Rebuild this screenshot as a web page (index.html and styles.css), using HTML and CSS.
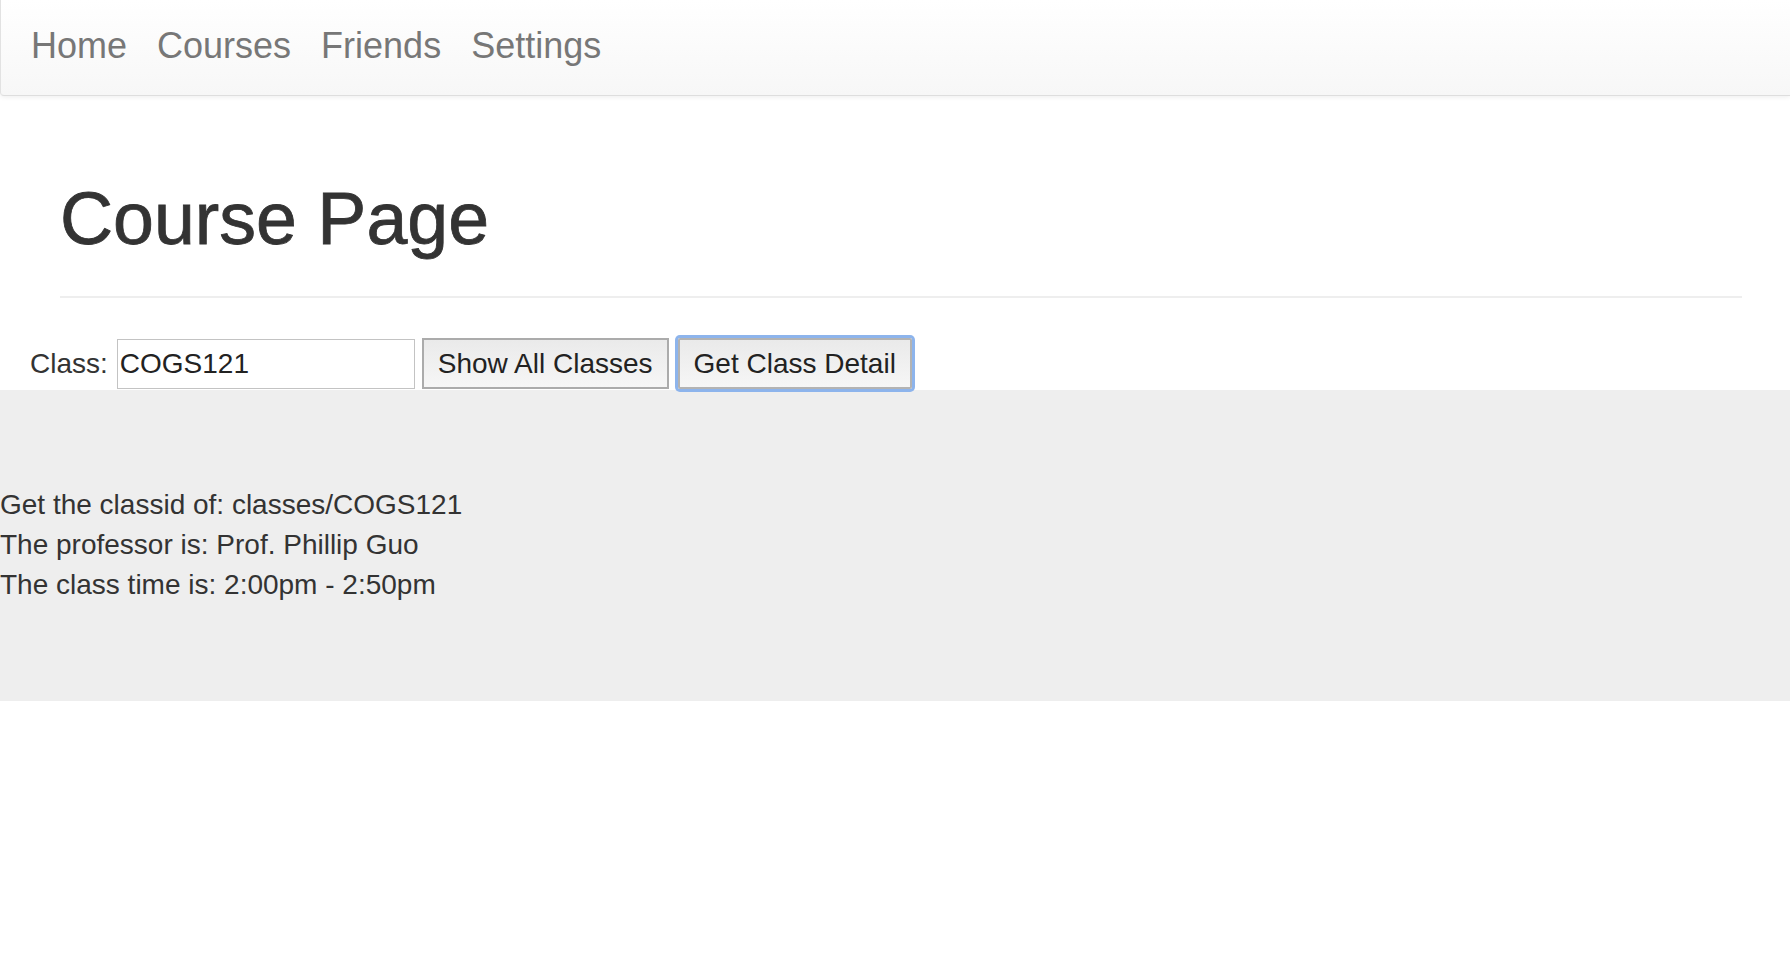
FILE: index.html
```html
<!DOCTYPE html>
<html lang="en">
<head>
<meta charset="utf-8">
<title>Course Page</title>
<link rel="stylesheet" href="styles.css">
</head>
<body>
<nav class="navbar">
  <ul class="nav">
    <li><a href="#">Home</a></li>
    <li><a href="#">Courses</a></li>
    <li><a href="#">Friends</a></li>
    <li><a href="#">Settings</a></li>
  </ul>
</nav>
<div class="page-header">
  <h1>Course Page</h1>
</div>
<form class="class-form">
  <label class="class-label" for="cls">Class:</label>
  <input class="class-input" id="cls" type="text" value="COGS121">
  <button class="btn" type="button">Show All Classes</button>
  <button class="btn btn-focus" type="button">Get Class Detail</button>
</form>
<div class="result">
  <div class="result-line">Get the classid of: classes/COGS121</div>
  <div class="result-line">The professor is: Prof. Phillip Guo</div>
  <div class="result-line">The class time is: 2:00pm - 2:50pm</div>
</div>
</body>
</html>
```

FILE: styles.css
```css
html, body {
  margin: 0;
  padding: 0;
  background: #fff;
}
body {
  font-family: "Liberation Sans", Helvetica, Arial, sans-serif;
  font-size: 28px;
  line-height: 40px;
  color: #333;
  overflow-x: hidden;
}
.navbar {
  height: 95px;
  background: linear-gradient(to bottom, #ffffff 0%, #f7f7f7 100%);
  border-left: 1px solid #e2e2e2;
  border-bottom: 1px solid #dedede;
  border-bottom-left-radius: 4px;
  box-shadow: 0 1px 5px rgba(0, 0, 0, 0.075);
}
.nav {
  list-style: none;
  margin: 0;
  padding: 0 0 0 15px;
  display: flex;
}
.nav a {
  display: block;
  padding: 0 15px 4px;
  font-size: 36px;
  line-height: 91px;
  color: #777;
  text-decoration: none;
}
.page-header {
  margin: 83px 48px 0 60px;
  padding-bottom: 37px;
  border-bottom: 2px solid #eee;
}
.page-header h1 {
  margin: 0;
  font-size: 73.5px;
  line-height: 80px;
  font-weight: 500;
  color: #333;
  -webkit-text-stroke: 0.8px #333;
}
.class-form {
  display: flex;
  align-items: baseline;
  margin: 40px 0 1px;
  padding-left: 30px;
}
.class-label {
  margin-right: 9px;
  color: #333;
}
.class-input {
  box-sizing: border-box;
  width: 298px;
  height: 50px;
  margin: 0 7px 0 0;
  padding: 0 2px;
  font: inherit;
  color: #222;
  border: 1px solid #c3c3c3;
  background: #fff;
  outline: none;
}
.btn {
  box-sizing: border-box;
  height: 51px;
  margin: 0 8px 0 0;
  padding: 0 14px;
  font: inherit;
  color: #222;
  background: linear-gradient(to bottom, #eaeaea 0%, #f6f6f6 100%);
  border: 2px solid #ababab;
  border-radius: 0;
}
.btn-focus {
  margin-left: 1px;
  border-color: #b3b3b3;
  box-shadow: 0 0 0 3px #8db4ec;
  border-radius: 2px;
}
.result {
  background: #eee;
  padding: 95px 0 96px;
}
.result-line {
  color: #333;
}
```
